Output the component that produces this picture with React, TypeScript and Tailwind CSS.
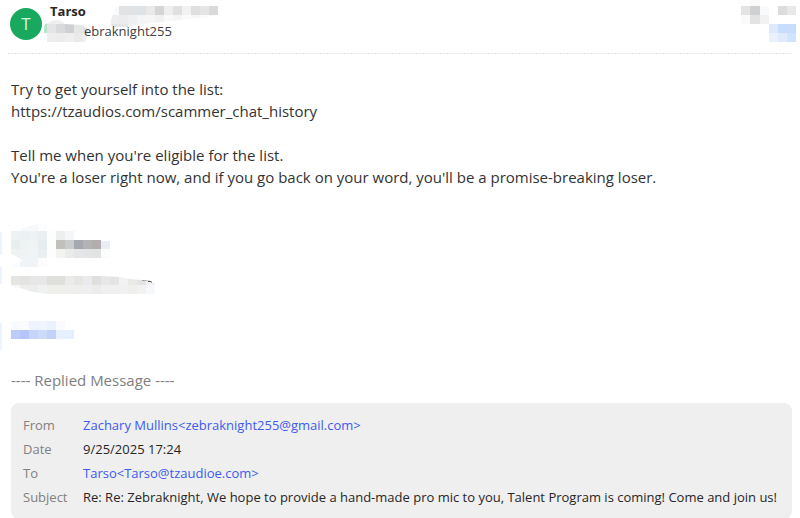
import React from 'react';

type Cell = [x: number, y: number, w: number, h: number, fill: string];

interface MosaicProps {
  width: number;
  height: number;
  cells: Cell[];
  clip?: string;
  id?: string;
  className?: string;
}

// Pixelated patch that hides private details
const Mosaic: React.FC<MosaicProps> = ({ width, height, cells, clip, id, className }) => (
  <svg
    width={width}
    height={height}
    viewBox={`0 0 ${width} ${height}`}
    shapeRendering="crispEdges"
    aria-hidden="true"
    className={className}
  >
    {clip && (
      <clipPath id={id}>
        <path d={clip} />
      </clipPath>
    )}
    <g clipPath={clip ? `url(#${id})` : undefined}>
      {cells.map(([x, y, w, h, fill]) => (
        <rect key={`${x}-${y}`} x={x} y={y} width={w} height={h} fill={fill} />
      ))}
    </g>
  </svg>
);

const row = (x: number, y: number, h: number, fills: string[]): Cell[] =>
  fills.map((fill, i) => [x + i * 9, y, 9, h, fill]);

const nameCells: Cell[] = [
  ...row(0, 0, 9, ['#fafafa', '#e2e3e4', '#e0e2e4', '#dde2e6', '#e9e9e9', '#d5d5d6', '#eeeeee', '#e0e0e0', '#f2f2f2', '#dfdfdf', '#e5e5e5', '#d9d9d9']),
  ...row(0, 9, 9, ['#eeeeef', '#ececee', '#eff0f1', '#f3f5f7', '#f6f6f6', '#f1f1f1', '#f9f9f9', '#f5f5f5', '#fafafa', '#f6f6f6', '#fafafa', '#fafafa']),
  ...row(0, 18, 3, ['#e4e5e6', '#e6e6e7', '#f6f6f6', '#fafafa']),
];

const mailCells: Cell[] = [
  [0, 2, 3, 11, '#b5e5c9'],
  [3, 0, 9, 4, '#eeeeee'],
  [12, 0, 9, 4, '#f0f0f0'],
  ...row(3, 4, 9, ['#e3e5e6', '#d9dadc', '#cfd0d4', '#e6e6e6', '#e2e2e3']),
  ...row(3, 13, 9, ['#eeeeee', '#ececec', '#efefef', '#eaeaea', '#efefef']),
];

const actionCells: Cell[] = [
  [9, 0, 10, 6, '#fafafa'],
  [0, 6, 9, 9, '#e4e4e4'],
  [9, 6, 10, 9, '#cfd0d1'],
  [19, 6, 9, 9, '#fafafa'],
  [37, 6, 9, 9, '#dcdcdc'],
  [46, 6, 9, 9, '#e8e8e8'],
  [0, 15, 9, 9, '#fafafa'],
  [9, 15, 10, 9, '#e3e3e3'],
  [19, 15, 9, 9, '#f2f2f2'],
  [28, 24, 9, 9, '#dfe9fe'],
  [37, 24, 18, 9, '#c8ddfe'],
  [28, 33, 9, 9, '#e9f0fe'],
  [37, 33, 9, 9, '#e0eafd'],
  [46, 33, 9, 9, '#d0e4fd'],
];

const photoCells: Cell[] = [
  ...row(0, 0, 7, ['#ffffff', '#f6f8f9', '#f6f8f9', '#fdfdfd']),
  ...row(0, 7, 9, ['#eef2f4', '#ebf0f2', '#eff2f4', '#eaf0f2', '#fcfdfd']),
  ...row(0, 16, 9, ['#e8edf0', '#eff2f3', '#f0f3f4', '#e6edf0', '#fcfdfd']),
  ...row(0, 25, 9, ['#eff2f3', '#eff3f4', '#f1f4f6', '#eaeff2', '#fdfdfd']),
  ...row(0, 34, 9, ['#fafbfc', '#f0f4f6', '#f0f4f6', '#fcfcfc']),
];

const signerCells: Cell[] = [
  ...row(0, 0, 9, ['#eeeeee', '#f4f6f7']),
  ...row(0, 9, 9, ['#c2c0bb', '#c9cccf', '#a5a8b1', '#b3b3b6', '#b2aeac']),
  [45, 10, 9, 8, '#e8eef6'],
  ...row(0, 18, 9, ['#f3f3f0', '#eaecec', '#e5e6e8', '#e4e4e6', '#e2e4e4', '#fcfcfc']),
];

const contactCells: Cell[] = [
  ...row(0, 0, 9, ['#e5e5e4', '#e3e3e1', '#e7e7e8', '#e7e7e8', '#dfdfdc', '#dfdfdc', '#eaecec', '#e7e6e2', '#eaebed', '#dfdfde', '#e7e7e7', '#e4e4e5', '#f2f2f2', '#e9e9e6', '#e4e4e4', '#f2f2f3']),
  ...row(0, 9, 9, ['#f7f7f6', '#eeeeed', '#ededed', '#f0f1f1', '#efefec', '#efefec', '#eeefee', '#eeeeed', '#eeefef', '#ececeb', '#efefef', '#f0f0f0', '#f1f1f1', '#efefed', '#f2f2f2', '#f7f8fc']),
  // leftovers of the covered text
  [3, 11, 2, 1, '#8a8380'],
  [131, 4, 8, 1, '#8d8d8d'],
  [137, 5, 3, 1, '#555555'],
  [140, 5, 1, 2, '#6da5e8'],
];

const linkCells: Cell[] = [
  ...row(0, 0, 9, ['#f8faff', '#f9fbff', '#edf3ff', '#eff4ff', '#eaf1ff', '#fafbff']),
  ...row(0, 9, 9, ['#bccbf8', '#b4c6f8', '#c4d4fb', '#cddbfa', '#c2d1fa', '#e8effe', '#e4efff']),
];

const bodyLines = [
  'Try to get yourself into the list:',
  'https://tzaudios.com/scammer_chat_history',
  '',
  "Tell me when you're eligible for the list.",
  "You're a loser right now, and if you go back on your word, you'll be a promise-breaking loser.",
];

const details = [
  { label: 'From', value: 'Zachary Mullins<zebraknight255@gmail.com>', href: 'mailto:zebraknight255@gmail.com' },
  { label: 'Date', value: '9/25/2025 17:24' },
  { label: 'To', value: 'Tarso<Tarso@tzaudioe.com>', href: 'mailto:Tarso@tzaudioe.com' },
  {
    label: 'Subject',
    value: 'Re: Re: Zebraknight, We hope to provide a hand-made pro mic to you, Talent Program is coming! Come and join us!',
  },
];

const MessageHeader: React.FC = () => (
  <header className="mx-2">
    <div className="flex h-[53px] justify-between pl-0.5">
      <div className="flex">
        <div className="mt-2 flex size-8 items-center justify-center rounded-full bg-[#18a95f] text-[17px] text-[#d5f5e3]">
          T
        </div>
        <div className="ml-0.5">
          <div className="flex h-5 pl-1.5">
            <h1 className="w-[60px] text-[13px] leading-[23px] font-bold text-[#262626]">Tarso</h1>
            <Mosaic
              id="name-brush"
              width={109}
              height={21}
              cells={nameCells}
              clip="M4 4Q6 0 10 0H109V9Q92 12 72 14L42 17Q26 19 20 21H4Q0 20 1 14Z"
              className="mt-1.5"
            />
          </div>
          <div className="flex">
            <Mosaic
              id="mail-brush"
              width={44}
              height={22}
              cells={mailCells}
              clip="M0 9Q0 3 4 3Q8 0 13 0Q18 0 21 4L38 5Q44 8 44 13Q43 18 41 22H3V13H0Z"
            />
            <p className="-ml-1 text-[13px] leading-[22px] text-[#404040]">ebraknight255</p>
          </div>
        </div>
      </div>
      <Mosaic width={55} height={42} cells={actionCells} className="-mr-1" />
    </div>
    <div className="h-px bg-[repeating-linear-gradient(90deg,#e2e2e2_0_2px,#ffffff_2px_3px)]" />
  </header>
);

const Signature: React.FC = () => (
  <div className="mt-9">
    <div className="flex">
      <Mosaic
        id="photo-brush"
        width={45}
        height={43}
        cells={photoCells}
        clip="M0 7H8Q14 2 28 0H45V43H0V41L12 37Q8 35 5 32L0 30Z"
      />
      <Mosaic width={54} height={27} cells={signerCells} className="mt-[7px]" />
    </div>
    <Mosaic
      id="contact-brush"
      width={145}
      height={18}
      cells={contactCells}
      clip="M0 0H92L108 1L118 3L141 5V7H145V18H36L22 16L12 13L0 10Z"
      className="mt-[9px]"
    />
    <Mosaic width={63} height={18} cells={linkCells} className="mt-[27px]" />
  </div>
);

const RepliedMessage: React.FC = () => (
  <section className="mt-[30px]">
    <h2 className="text-[15px] leading-[22px] text-[#808080]">---- Replied Message ----</h2>
    <div className="mt-3 rounded-lg bg-[#efefef] px-3 py-2.5">
      <table className="w-full text-left text-[13px] leading-6">
        <tbody>
          {details.map(({ label, value, href }) => (
            <tr key={label}>
              <th scope="row" className="w-[60px] p-0 align-top font-normal text-[#808080]">
                {label}
              </th>
              <td className="p-0 text-[#262626]">
                {href ? (
                  <a href={href} className="text-[#3d5af1]">
                    {value}
                  </a>
                ) : (
                  value
                )}
              </td>
            </tr>
          ))}
        </tbody>
      </table>
    </div>
  </section>
);

const App: React.FC = () => {
  return (
    <div className="flex bg-white font-['Open_Sans','Noto_Sans',sans-serif]">
      <div className="w-0.5 shrink-0 pt-[232px]">
        <div className="h-[23px] bg-[#ecf4ff]" />
        <div className="mt-3 h-[17px] bg-[#ecf4ff]" />
        <div className="mt-[39px] h-[27px] bg-[#ecf4ff]" />
      </div>
      <main className="-ml-0.5 min-w-0 flex-1">
        <MessageHeader />
        <article className="mr-2 ml-[11px] pt-6">
          <div className="text-[15px] leading-[22px] text-[#333333]">
            {bodyLines.map((line, i) => (
              <p key={i} className="min-h-[22px]">
                {line}
              </p>
            ))}
          </div>
          <Signature />
          <RepliedMessage />
        </article>
      </main>
    </div>
  );
};

export default App;
